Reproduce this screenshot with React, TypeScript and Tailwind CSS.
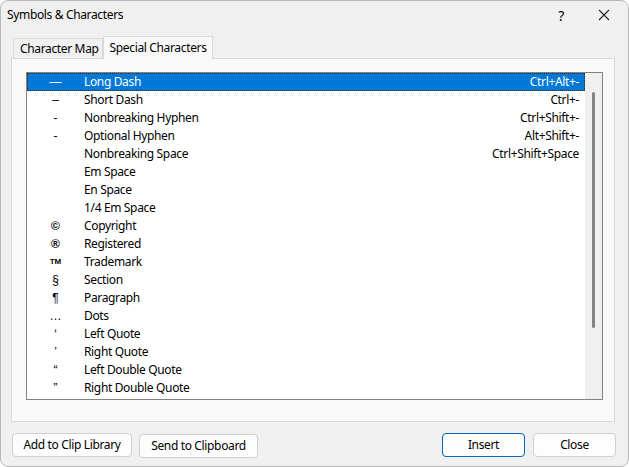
import React from "react";

const rows: [string, string, string][] = [
  ["\u2014", "Long Dash", "Ctrl+Alt+-"],
  ["\u2013", "Short Dash", "Ctrl+-"],
  ["-", "Nonbreaking Hyphen", "Ctrl+Shift+-"],
  ["-", "Optional Hyphen", "Alt+Shift+-"],
  ["", "Nonbreaking Space", "Ctrl+Shift+Space"],
  ["", "Em Space", ""],
  ["", "En Space", ""],
  ["", "1/4 Em Space", ""],
  ["\u00a9", "Copyright", ""],
  ["\u00ae", "Registered", ""],
  ["TM", "Trademark", ""],
  ["\u00a7", "Section", ""],
  ["\u00b6", "Paragraph", ""],
  ["\u2026", "Dots", ""],
  ["\u2018", "Left Quote", ""],
  ["\u2019", "Right Quote", ""],
  ["\u201c", "Left Double Quote", ""],
  ["\u201d", "Right Double Quote", ""],
];

const Button: React.FC<{ label: string; w: string; primary?: boolean }> = ({ label, w, primary }) => (
  <button
    className={`${w} h-[24px] rounded-[4px] bg-[#fdfdfd] text-[12px] text-black border ${
      primary ? "border-[#0067c0]" : "border-[#d0d0d0]"
    }`}
  >
    {label}
  </button>
);

const App: React.FC = () => {
  return (
    <div
      className="w-[629px] h-[467px] bg-[#f0f0f0] border border-[#b9b9b9] rounded-lg flex flex-col overflow-hidden text-black tracking-[-0.35px]"
      style={{ fontFamily: '"Noto Sans", "Open Sans", sans-serif' }}
    >
      {/* title bar */}
      <div className="h-[28px] flex items-center pl-[6px] shrink-0">
        <span className="text-[12px]">Symbols &amp; Characters</span>
        <div className="ml-auto flex items-center">
          <span className="text-[14px] w-[20px] text-center mr-[27px]">?</span>
          <svg width="12" height="12" viewBox="0 0 12 12" className="mr-[18px]">
            <path d="M1 1 L11 11 M11 1 L1 11" stroke="#222" strokeWidth="1.1" />
          </svg>
        </div>
      </div>

      {/* tabs */}
      <div className="flex items-end pl-[12px] h-[29px] shrink-0">
        <div className="h-[20px] pl-[6px] pr-[3px] flex items-center text-[12px] bg-[#f0f0f0] border border-b-0 border-[#dadada]">
          Character Map
        </div>
        <div className="h-[23px] pl-[6px] pr-[5px] flex items-center text-[12px] bg-[#f9f9f9] border border-b-0 border-[#dadada] -mb-px relative z-10">
          Special Characters
        </div>
      </div>

      {/* tab panel */}
      <div className="mx-[10px] w-[604px] h-[364px] bg-[#f9f9f9] border border-[#dadada] pt-[13px] pl-[14px] shrink-0">
        <div className="w-[577px] h-[328px] border border-[#828282] bg-white flex">
          <div className="flex-1 flex flex-col">
            {rows.map(([sym, name, key], i) => {
              const sel = i === 0;
              return (
                <div
                  key={name}
                  className={`h-[18px] flex items-center text-[12px] ${
                    sel ? "bg-[#0078d7] text-white outline outline-1 outline-dotted outline-[#3a2a10] -outline-offset-1" : ""
                  }`}
                >
                  <span
                    className={`w-[57px] text-center tracking-normal ${sym === "TM" ? "text-[8px] font-bold" : "text-[12px]"} ${
                      sym === "\u00a9" || sym === "\u00ae" ? "font-bold" : ""
                    }`}
                    style={{ fontFamily: '"Liberation Sans", "DejaVu Sans", sans-serif' }}
                  >
                    {sym}
                  </span>
                  <span>{name}</span>
                  <span className="ml-auto pr-[6px]">{key}</span>
                </div>
              );
            })}
          </div>
          <div className="w-[17px] bg-[#f0f0f0] flex justify-center pt-[19px]">
            <div className="w-[3px] h-[236px] rounded-full bg-[#858585]" />
          </div>
        </div>
      </div>

      {/* buttons */}
      <div className="flex items-center pl-[11px] pr-[12px] mt-[10px]">
        <Button label="Add to Clip Library" w="w-[120px]" />
        <div className="ml-[7px]">
          <Button label="Send to Clipboard" w="w-[119px]" />
        </div>
        <div className="ml-auto flex gap-[8px]">
          <Button label="Insert" w="w-[83px]" primary />
          <Button label="Close" w="w-[83px]" />
        </div>
      </div>
    </div>
  );
};

export default App;
